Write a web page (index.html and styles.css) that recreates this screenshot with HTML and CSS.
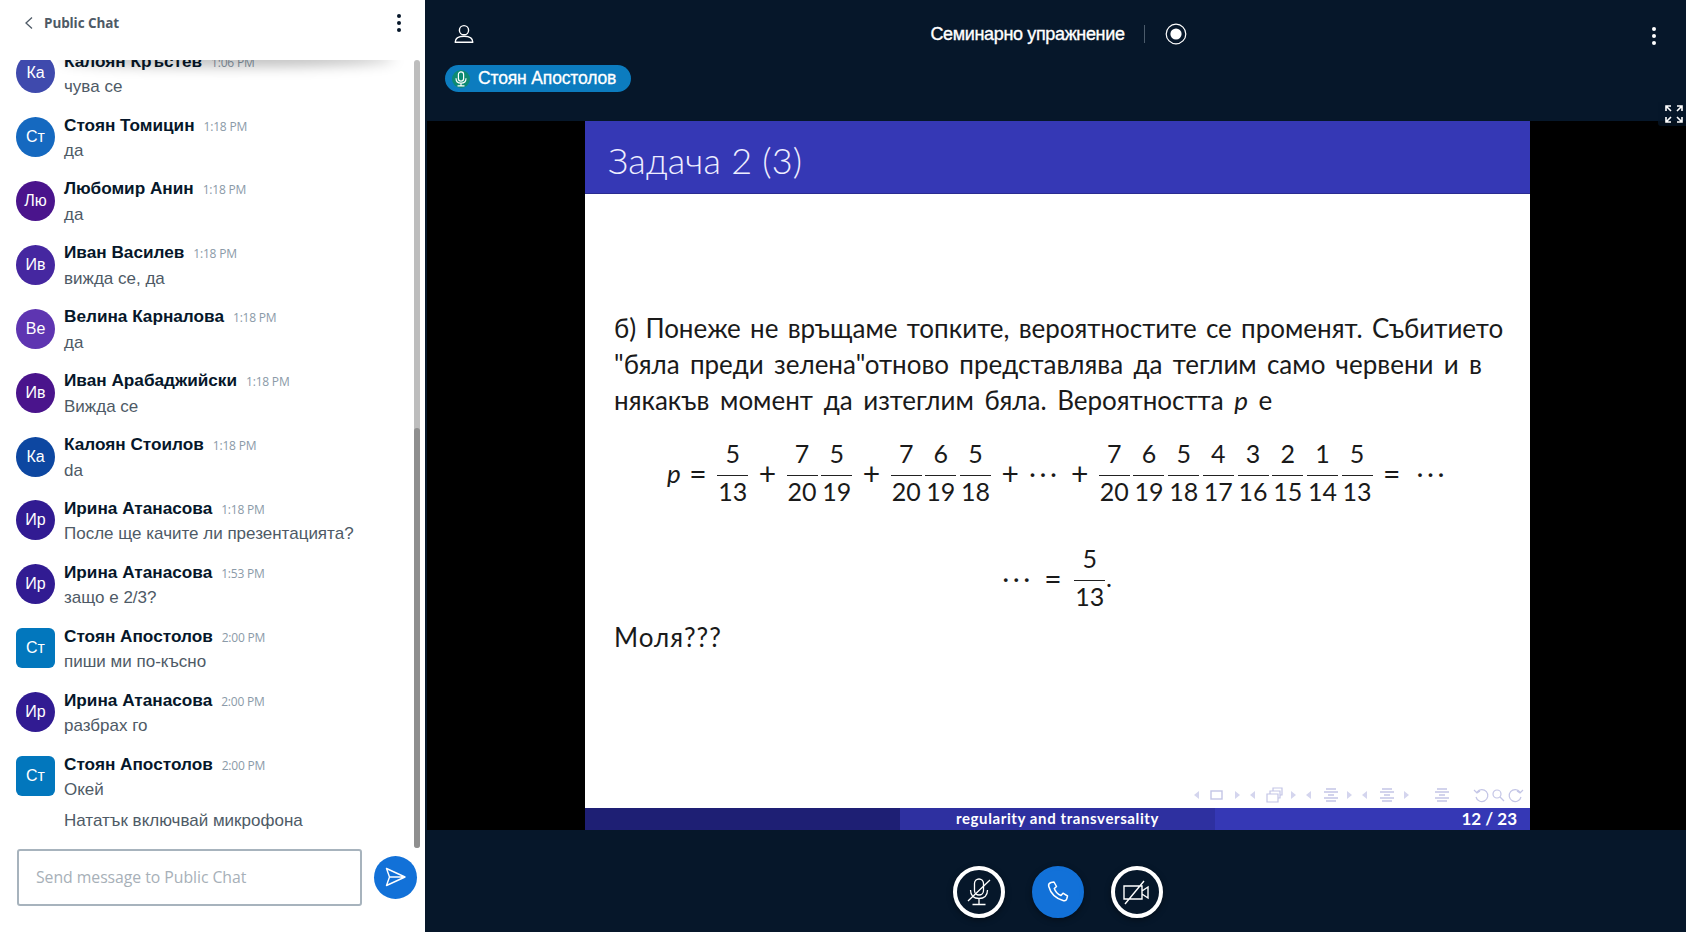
FILE: index.html
```html
<!DOCTYPE html>
<html>
<head>
  <title>Семинарно упражнение</title>
  <link rel="stylesheet" href="styles.css">
</head>
<body>
  <div class="app">
    <aside class="chat">
      <div class="chat-head">
        <svg class="back" width="12" height="14" viewBox="0 0 12 14"><path d="M9 1.5 3 7l6 5.5" fill="none" stroke="#4e5a66" stroke-width="1.3"/></svg>
        <span class="chat-title">Public Chat</span>
        <span class="kebab dark"><i></i><i></i><i></i></span>
      </div>
      <div class="chat-body">
        <div class="messages">
          <div class="msg"><div class="avatar a1">Ка</div><div class="msg-main"><div class="msg-top"><span class="name">Калоян Кръстев</span><span class="time">1:06 PM</span></div><p>чува се</p></div></div>
          <div class="msg"><div class="avatar a2">Ст</div><div class="msg-main"><div class="msg-top"><span class="name">Стоян Томицин</span><span class="time">1:18 PM</span></div><p>да</p></div></div>
          <div class="msg"><div class="avatar a3">Лю</div><div class="msg-main"><div class="msg-top"><span class="name">Любомир Анин</span><span class="time">1:18 PM</span></div><p>да</p></div></div>
          <div class="msg"><div class="avatar a4">Ив</div><div class="msg-main"><div class="msg-top"><span class="name">Иван Василев</span><span class="time">1:18 PM</span></div><p>вижда се, да</p></div></div>
          <div class="msg"><div class="avatar a5">Ве</div><div class="msg-main"><div class="msg-top"><span class="name">Велина Карналова</span><span class="time">1:18 PM</span></div><p>да</p></div></div>
          <div class="msg"><div class="avatar a3">Ив</div><div class="msg-main"><div class="msg-top"><span class="name">Иван Арабаджийски</span><span class="time">1:18 PM</span></div><p>Вижда се</p></div></div>
          <div class="msg"><div class="avatar a6">Ка</div><div class="msg-main"><div class="msg-top"><span class="name">Калоян Стоилов</span><span class="time">1:18 PM</span></div><p>da</p></div></div>
          <div class="msg"><div class="avatar a7">Ир</div><div class="msg-main"><div class="msg-top"><span class="name">Ирина Атанасова</span><span class="time">1:18 PM</span></div><p>После ще качите ли презентацията?</p></div></div>
          <div class="msg"><div class="avatar a7">Ир</div><div class="msg-main"><div class="msg-top"><span class="name">Ирина Атанасова</span><span class="time">1:53 PM</span></div><p>защо е 2/3?</p></div></div>
          <div class="msg"><div class="avatar a8">Ст</div><div class="msg-main"><div class="msg-top"><span class="name">Стоян Апостолов</span><span class="time">2:00 PM</span></div><p>пиши ми по-късно</p></div></div>
          <div class="msg"><div class="avatar a7">Ир</div><div class="msg-main"><div class="msg-top"><span class="name">Ирина Атанасова</span><span class="time">2:00 PM</span></div><p>разбрах го</p></div></div>
          <div class="msg"><div class="avatar a8">Ст</div><div class="msg-main"><div class="msg-top"><span class="name">Стоян Апостолов</span><span class="time">2:00 PM</span></div><p>Окей</p><p class="more">Нататък включвай микрофона</p></div></div>
        </div>
        <div class="scroll-track"><div class="scroll-thumb"></div></div>
        <div class="head-shadow"></div>
      </div>
      <div class="chat-form">
        <div class="chat-input">Send message to Public Chat</div>
        <div class="send">
          <svg width="22" height="20" viewBox="0 0 22 20"><path d="M1.5 1.5 20 10 1.5 18.5 4.5 10ZM4.5 10H20" fill="none" stroke="#fff" stroke-width="1.4" stroke-linejoin="round"/></svg>
        </div>
      </div>
    </aside>

    <main class="main">
      <header class="top">
        <div class="top-bar">
          <div class="top-left">
            <svg width="20" height="20" viewBox="0 0 20 20"><circle cx="10" cy="6.2" r="4.6" fill="none" stroke="#fff" stroke-width="1.4"/><path d="M1.2 18.3c0-3.8 3-6 8.8-6s8.8 2.2 8.8 6Z" fill="none" stroke="#fff" stroke-width="1.4" stroke-linejoin="round"/></svg>
          </div>
          <div class="top-title">
            <span>Семинарно упражнение</span>
            <span class="divider"></span>
            <svg width="22" height="22" viewBox="0 0 22 22"><circle cx="11" cy="11" r="9.8" fill="none" stroke="#fff" stroke-width="1.2"/><circle cx="11" cy="11" r="5.6" fill="#fff"/></svg>
          </div>
          <div class="top-right"><span class="kebab"><i></i><i></i><i></i></span></div>
        </div>
        <div class="talker">
          <span class="talker-icon">
            <svg width="12" height="16" viewBox="0 0 12 16"><rect x="3.4" y="0.8" width="5.2" height="9.4" rx="2.6" fill="none" stroke="#fff" stroke-width="1.2"/><path d="M1 7.2c0 3.2 2 4.9 5 4.9s5-1.7 5-4.9M6 12.100v2.400M2.500 14.900h7" fill="none" stroke="#fff" stroke-width="1.2"/></svg>
          </span>
          <span>Стоян Апостолов</span>
        </div>
      </header>

      <section class="stage">
        <div class="slide">
          <div class="slide-head">Задача 2 (3)</div>
          <div class="slide-body">
            <div class="line l1">б) Понеже не връщаме топките, вероятностите се променят. Събитието</div>
            <div class="line l2">"бяла преди зелена"отново представлява да теглим само червени и в</div>
            <div class="line l3">някакъв момент да изтеглим бяла. Вероятността <em>p</em> е</div>
            <div class="math">
              <span class="cell p"><em>p</em></span><span class="cell">=</span>
              <span class="frac"><b>5</b><b>13</b></span><span class="cell">+</span>
              <span class="frac"><b>7</b><b>20</b></span><span class="frac"><b>5</b><b>19</b></span><span class="cell">+</span>
              <span class="frac"><b>7</b><b>20</b></span><span class="frac"><b>6</b><b>19</b></span><span class="frac"><b>5</b><b>18</b></span><span class="cell">+</span>
              <span class="cell dots">···</span><span class="cell">+</span>
              <span class="frac"><b>7</b><b>20</b></span><span class="frac"><b>6</b><b>19</b></span><span class="frac"><b>5</b><b>18</b></span><span class="frac"><b>4</b><b>17</b></span><span class="frac"><b>3</b><b>16</b></span><span class="frac"><b>2</b><b>15</b></span><span class="frac"><b>1</b><b>14</b></span><span class="frac"><b>5</b><b>13</b></span>
              <span class="cell">=</span><span class="cell dots wide">···</span>
            </div>
            <div class="math second">
              <span class="cell dots">···</span><span class="cell">=</span>
              <span class="frac"><b>5</b><b>13</b></span><span class="dot">.</span>
            </div>
            <div class="line please">Моля???</div>
          </div>
          <div class="slide-nav">
            <svg width="335" height="16" viewBox="0 0 335 16" fill="none" stroke="#c3c5e6" stroke-width="1.2">
              <path d="M8 4v8L3 8ZM44 4v8l5-4ZM64 4v8l-5-4ZM100 4v8l5-4ZM120 4v8l-5-4ZM156 4v8l5-4ZM176 4v8l-5-4ZM213 4v8l5-4Z" fill="#d4d5ee" stroke="none"/>
              <rect x="20" y="4" width="11" height="8" stroke-width="1.4"/>
              <path d="M76 7h11v8H76ZM79 7V4h10v7h-2M82 4V1h9v7h-2"/>
              <path d="M135 2h10M133 5h14M137 8h6M133 11h14M135 14h10M191 2h10M189 5h14M193 8h6M189 11h14M191 14h10M246 2h10M244 5h14M248 8h6M244 11h14M246 14h10" stroke-width="1.6"/>
              <path d="M286 5a6 6 0 1 1-1 5M283 3l3 3 3-2M329 5a6 6 0 1 0 1 5M332 3l-3 3-3-2"/>
              <circle cx="306" cy="7" r="4"/><path d="m309 10 4 4"/>
            </svg>
          </div>
          <div class="slide-foot">
            <div class="foot-a"></div>
            <div class="foot-b">regularity and transversality</div>
            <div class="foot-c">12 / 23</div>
          </div>
        </div>
        <div class="expand">
          <svg width="18" height="18" viewBox="0 0 18 18" fill="none" stroke="#fff" stroke-width="1.6"><path d="M1 6V1h5M1 1l5 5M17 6V1h-5M17 1l-5 5M1 12v5h5M1 17l5-5M17 12v5h-5M17 17l-5-5"/></svg>
        </div>
      </section>

      <footer class="controls">
        <div class="round">
          <svg width="26" height="28" viewBox="0 0 26 28" fill="none" stroke="#fff" stroke-width="1.300"><rect x="8.500" y="1" width="9" height="16" rx="4.500"/><path d="M4.500 12c0 6 3.500 8.500 8.500 8.500s8.500-2.500 8.500-8.500M13 20.500V26M6.500 26.500h13M2 23 24 2" /></svg>
        </div>
        <div class="round phone">
          <svg width="22" height="22" viewBox="0 0 22 22" fill="none" stroke="#fff" stroke-width="1.500"><path d="M4 1.500 7 1l2.500 4.500L7.300 7.500c1 3 3.500 5.700 6.700 7l2-2.300 4.500 2.800-.8 3c-.5 1.500-2 2-3.700 1.500C9 17.500 3.500 12 1.700 5.300 1.300 3.500 2.500 2 4 1.500Z" stroke-linejoin="round"/></svg>
        </div>
        <div class="round">
          <svg width="30" height="26" viewBox="0 0 30 26" fill="none" stroke="#fff" stroke-width="1.400"><path d="M2 7h18v13H2ZM20 12l6-4v11l-6-4M3 25 22 2"/></svg>
        </div>
      </footer>
    </main>
  </div>
</body>
</html>
```

FILE: styles.css
```css
html, body {
  margin: 0;
  height: 100%;
  overflow: hidden;
}
body {
  font-family: "Liberation Sans", Arial, sans-serif;
  background: #06172a;
}
.app {
  display: flex;
  width: 1686px;
  height: 932px;
}

/* chat */
.chat {
  width: 425px;
  flex: none;
  display: flex;
  flex-direction: column;
  background: #fff;
}
.chat-head {
  height: 60px;
  flex: none;
  display: flex;
  align-items: center;
  padding: 0 24px 14px 23px;
  box-sizing: border-box;
}
.chat-title {
  margin-left: 9px;
  flex: 1;
  font-family: "Open Sans", sans-serif;
  font-size: 13.5px;
  font-weight: 700;
  letter-spacing: -0.1px;
  color: #4e5a66;
}
.kebab {
  display: flex;
  flex-direction: column;
  gap: 3px;
}
.kebab i {
  width: 4px;
  height: 4px;
  border-radius: 50%;
  background: #fff;
}
.kebab.dark i {
  background: #06172a;
}
.chat-body {
  position: relative;
  flex: 1;
  min-height: 0;
  display: flex;
  flex-direction: column;
  justify-content: flex-end;
  overflow: hidden;
}
.messages {
  padding: 0 30px 17px 16px;
}
.msg {
  display: flex;
  height: 63.9px;
}
.msg:last-child {
  height: 75px;
}
.avatar {
  width: 39px;
  height: 40px;
  flex: none;
  border-radius: 50%;
  color: #fff;
  font-size: 16px;
  display: flex;
  align-items: center;
  justify-content: center;
}
.a1 { background: #3f4aad; }
.a2 { background: #1569c0; }
.a3 { background: #4a148c; }
.a4 { background: #4527a0; }
.a5 { background: #5e35b1; }
.a6 { background: #0d47a1; }
.a7 { background: #311b92; }
.a8 { background: #0277bd; border-radius: 6px; }
.msg-main {
  margin-left: 9px;
  margin-top: -2px;
}
.msg-top {
  display: flex;
  align-items: center;
  height: 20px;
}
.name {
  font-size: 17.2px;
  font-weight: 700;
  color: #06172a;
}
.time {
  margin-left: 9px;
  padding-top: 2px;
  font-family: "Open Sans", sans-serif;
  font-size: 12px;
  letter-spacing: -0.2px;
  color: #8b9aa8;
}
.msg p {
  margin: 6px 0 0;
  font-size: 17px;
  line-height: 20px;
  color: #4e5a66;
}
.msg p.more {
  margin-top: 11px;
}
.scroll-track {
  position: absolute;
  top: 0;
  bottom: 0;
  right: 5px;
  width: 6px;
  border-radius: 3px;
  background: #bdbdbd;
}
.scroll-thumb {
  position: absolute;
  left: 0;
  right: 0;
  bottom: 0;
  height: 420px;
  border-radius: 3px;
  background: #8f8f8f;
}
.head-shadow {
  position: absolute;
  top: -16px;
  left: 60px;
  right: 30px;
  height: 16px;
  border-radius: 50%;
  box-shadow: 0 6px 14px rgba(0, 0, 0, 0.28);
}
.chat-form {
  flex: none;
  display: flex;
  align-items: center;
  height: 84px;
  padding: 0 8px 26px 17px;
  box-sizing: border-box;
}
.chat-input {
  width: 345px;
  height: 57px;
  box-sizing: border-box;
  border: 2px solid #a7b3bd;
  border-radius: 3px;
  padding-left: 17px;
  line-height: 53px;
  font-family: "Open Sans", sans-serif;
  font-size: 15.8px;
  letter-spacing: -0.05px;
  color: #a7b0b8;
}
.send {
  margin-left: 12px;
  width: 43px;
  height: 43px;
  border-radius: 50%;
  background: #1271d8;
  display: flex;
  align-items: center;
  justify-content: center;
}

/* main area */
.main {
  flex: 1;
  min-width: 0;
  display: flex;
  flex-direction: column;
}
.top {
  height: 121px;
  flex: none;
  color: #fff;
}
.top-bar {
  display: grid;
  grid-template-columns: 1fr auto 1fr;
  align-items: center;
  height: 68px;
  padding: 0 30px 0 29px;
}
.top-title {
  display: flex;
  align-items: center;
  padding-left: 7px;
  font-size: 18px;
  letter-spacing: -0.35px;
  -webkit-text-stroke: 0.35px #fff;
}
.divider {
  width: 1px;
  height: 18px;
  margin: 0 20px 0 19px;
  background: #4b5b6b;
}
.top-left svg {
  display: block;
}
.top-right {
  display: flex;
  justify-content: flex-end;
  padding-top: 3px;
}
.talker {
  display: inline-flex;
  align-items: center;
  height: 27px;
  margin: -3px 0 0 20px;
  padding: 0 15px 0 7px;
  border-radius: 14px;
  background: #0c7cbf;
  font-size: 17.5px;
  letter-spacing: -0.15px;
  -webkit-text-stroke: 0.3px #fff;
}
.talker-icon {
  width: 18px;
  height: 18px;
  margin-right: 8px;
  border-radius: 50%;
  background: #0d8a72;
  display: flex;
  align-items: center;
  justify-content: center;
}
.stage {
  position: relative;
  flex: none;
  height: 709px;
  margin-left: 2px;
  background: #000;
  display: flex;
}
.expand {
  position: absolute;
  top: -19px;
  right: 0;
  width: 28px;
  height: 24px;
  padding-left: 3px;
  box-sizing: border-box;
  border-radius: 3px 0 0 3px;
  background: rgba(6, 23, 42, 0.7);
  display: flex;
  align-items: center;
  justify-content: center;
}
.slide {
  width: 945px;
  margin-left: 158px;
  background: #fff;
  display: flex;
  flex-direction: column;
  font-family: "Lato", sans-serif;
  color: #1a1a1a;
}
.slide-head {
  height: 73px;
  flex: none;
  background: #3538b5;
  border-bottom: 1px solid #2a2c90;
  box-sizing: border-box;
  padding-left: 23px;
  line-height: 78px;
  font-size: 36px;
  font-weight: 300;
  letter-spacing: 0.2px;
  color: #eef;
}
.slide-body {
  flex: 1;
  min-height: 0;
  padding: 116px 0 0 29px;
}
.line {
  height: 36px;
  line-height: 36px;
  font-size: 26px;
  white-space: nowrap;
}
.l1 { word-spacing: 2.6px; }
.l2 { word-spacing: 3.6px; }
.l3 { word-spacing: 4px; }
.line em, .cell em {
  font-style: italic;
}
.math {
  display: flex;
  align-items: center;
  margin: 16px 0 0 32px;
  font-size: 25px;
}
.math.second {
  margin: 33px 0 0 387px;
}
.math.second .frac {
  margin-left: 2px;
}
.cell {
  width: 34.7px;
  flex: none;
  text-align: center;
  padding-top: 5px;
  font-size: 30px;
}
.cell.p {
  font-size: 26px;
  text-align: right;
}
.cell.dots {
  font-size: 25px;
  letter-spacing: 4px;
}
.cell.wide {
  width: 47px;
}
.dot {
  margin-left: -1px;
  margin-top: 4px;
}
.frac {
  width: 34.7px;
  flex: none;
  display: flex;
  flex-direction: column;
  align-items: center;
}
.frac b {
  font-weight: 400;
  line-height: 30px;
  width: 31px;
  text-align: center;
}
.frac b:first-child {
  line-height: 38px;
  padding-bottom: 3px;
  border-bottom: 1px solid #222;
}
.please {
  margin-top: 7.5px;
  letter-spacing: 1px;
}
.slide-nav {
  flex: none;
  height: 22px;
  display: flex;
  justify-content: flex-end;
  padding-right: 4px;
}
.slide-nav svg {
  margin-top: 1px;
}
.slide-foot {
  flex: none;
  height: 22px;
  display: grid;
  grid-template-columns: 315px 315px 315px;
  color: #fff;
  font-family: "Lato", sans-serif;
  font-weight: 700;
  line-height: 21px;
}
.foot-a { background: #1e1f74; }
.foot-b {
  background: #2e30a0;
  text-align: center;
  font-size: 15px;
  letter-spacing: 0.6px;
}
.foot-c {
  background: #3538b5;
  text-align: right;
  padding-right: 13px;
  font-size: 17px;
}
.controls {
  flex: 1;
  display: flex;
  align-items: center;
  justify-content: center;
  gap: 27px;
  padding-top: 23px;
  box-sizing: border-box;
  padding-bottom: 2px;
  margin-left: 5px;
}
.round {
  width: 52px;
  height: 52px;
  box-sizing: border-box;
  border: 4px solid #fff;
  border-radius: 50%;
  display: flex;
  align-items: center;
  justify-content: center;
  box-shadow: 0 2px 6px rgba(0, 0, 0, 0.4);
}
.round.phone {
  background: #1271d8;
  border-color: #1271d8;
}
```
